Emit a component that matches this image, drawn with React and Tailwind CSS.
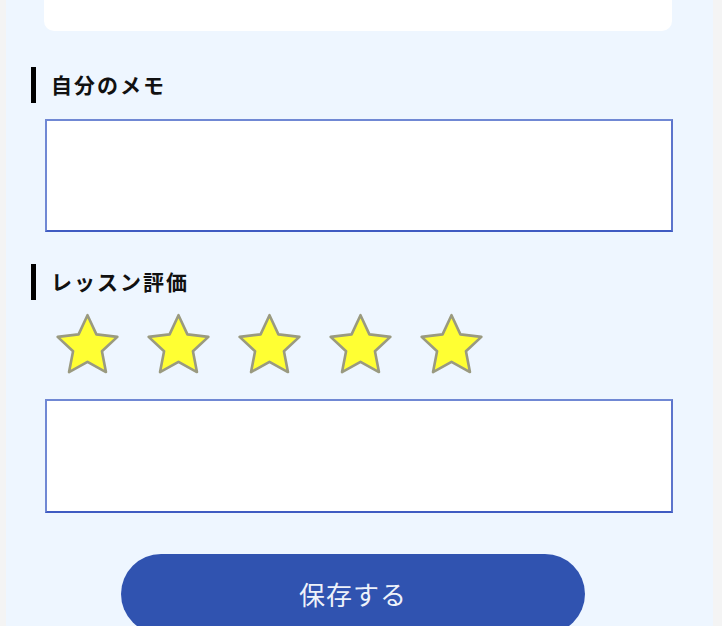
const font = { fontFamily: '"Noto Sans CJK JP", "Noto Sans", sans-serif' };

function Star() {
  return (
    <svg width="67" height="64" viewBox="0 0 64 61" className="shrink-0">
      <path
        d="M32 3 L40.52 21.27 L60.53 23.73 L45.79 37.48 L49.63 57.27 L32 47.5 L14.37 57.27 L18.21 37.48 L3.47 23.73 L23.48 21.27 Z"
        fill="#ffff33"
        stroke="#9a9a80"
        strokeWidth="2.5"
        strokeLinejoin="round"
      />
    </svg>
  );
}

function Heading({ label, className }) {
  return (
    <div className={`flex items-center ${className}`}>
      <div className="ml-[25px] w-[5px] h-[36px] bg-black" />
      <span className="ml-[15px] text-[21px] font-bold tracking-[2px] text-[#111]">{label}</span>
    </div>
  );
}

export default function App() {
  return (
    <div className="w-[722px] h-[626px] bg-[#f4f4f4] flex pl-[6px] pr-[9px] overflow-hidden" style={font}>
      <div className="flex-1 bg-[#eef6ff] flex flex-col">
        <div className="ml-[38px] w-[628px] h-[31px] bg-white rounded-b-[10px] shrink-0" />

        <Heading label="自分のメモ" className="mt-[36px]" />
        <textarea className="mt-[16px] ml-[39px] w-[628px] h-[113px] shrink-0 bg-white border-2 border-[#7088d4] border-b-[#3f5bc2] border-r-[#5c74cc] resize-none outline-none" />

        <Heading label="レッスン評価" className="mt-[32px]" />
        <div className="mt-[12px] ml-[48px] flex gap-[24px]">
          <Star />
          <Star />
          <Star />
          <Star />
          <Star />
        </div>
        <textarea className="mt-[23px] ml-[39px] w-[628px] h-[114px] shrink-0 bg-white border-2 border-[#7088d4] border-b-[#3f5bc2] border-r-[#5c74cc] resize-none outline-none" />

        <button className="mt-[41px] ml-[115px] w-[464px] h-[80px] shrink-0 rounded-full bg-[#3053b0] text-[#eef2fa] text-[26px] tracking-[1px] flex items-center justify-center pb-[2px]">
          保存する
        </button>
      </div>
    </div>
  );
}
